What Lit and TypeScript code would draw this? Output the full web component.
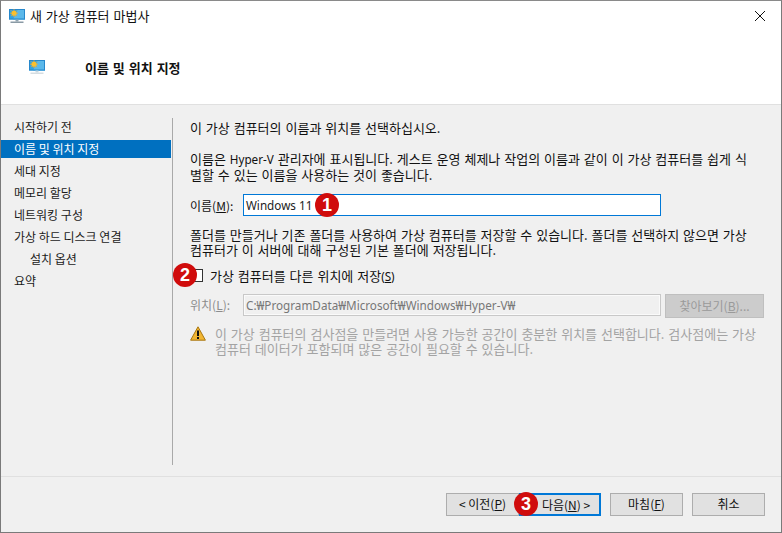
import { LitElement, html, css, svg } from "lit";
import { customElement } from "lit/decorators.js";

const monitor = (small: boolean) => svg`
  <svg class=${small ? "ico-title" : "ico-head"} viewBox="0 0 16 15" width="16" height="15">
    <rect x="0" y="0" width="16" height="10.5" fill="#35a3e2"/>
    <path d="M9 0H16V10.5H4Z" fill="#5bb8ea"/>
    <rect x="0.5" y="0.5" width="15" height="9.5" fill="none" stroke="#2788cc" stroke-width="1"/>
    <path d="M5 0.3V8M1.2 4.2H8.8M2.3 1.5L7.7 6.9M7.7 1.5L2.3 6.9" stroke="#f6a623" stroke-width="1"/>
    <circle cx="5" cy="4.2" r="2.5" fill="#fbc02d"/>
    <rect x="6.5" y="10.5" width="3" height="2" fill=${small ? "#8fa3b0" : "#c5d6e0"}/>
    <rect x="1.5" y="12.5" width="13" height="1.5" fill=${small ? "#8a9aa5" : "#d5dde2"}/>
  </svg>`;

@customElement("app-root")
export class AppRoot extends LitElement {
  static styles = css`
    :host {
      display: block;
      width: 782px;
      height: 533px;
      font-family: "Noto Sans CJK KR", "Noto Sans", sans-serif;
      font-size: 12px;
      color: #111;
    }
    .win {
      box-sizing: border-box;
      width: 782px;
      height: 533px;
      position: relative;
      display: flex;
      flex-direction: column;
      border: 1px solid #7a7a7a;
      border-top-color: #8a8a8a;
      background: #f0f0f0;
      overflow: hidden;
    }
    .titlebar {
      height: 30px;
      background: #fff;
      display: flex;
      align-items: center;
      padding-left: 8px;
      gap: 5px;
      flex: none;
    }
    .titlebar .t { flex: 1; font-size: 13px; word-spacing: 1px; line-height: 16px; }
    .close { width: 12px; height: 12px; margin-right: 15px; display: block; }
    .ico-title, .ico-head { display: block; flex: none; }
    .header {
      height: 74px;
      background: #fff;
      display: flex;
      align-items: center;
      padding-left: 28px;
      box-sizing: border-box;
      border-bottom: 1px solid #e0e0e0;
      flex: none;
    }
    .header b { margin-left: 40px; font-weight: 700; font-size: 13px; word-spacing: 1px; }
    .main {
      flex: 1;
      display: flex;
      min-height: 0;
      padding-top: 13px;
    }
    .nav {
      width: 170px;
      flex: none;
      list-style: none;
      margin: 0;
      padding: 0;
      display: flex;
      flex-direction: column;
      gap: 4px;
    }
    .nav li {
      height: 18px;
      line-height: 18px;
      padding-left: 13px;
      white-space: nowrap;
      color: #1a1a1a;
    }
    .nav li.sel { background: #0070c0; color: #fff; }
    .nav li.sub { padding-left: 29px; }
    .divider {
      width: 1px;
      background: #a9a9a9;
      margin: 0 0 11px 1px;
      flex: none;
    }
    .content {
      flex: 1;
      padding: 2px 17px 0 17px;
      min-width: 0;
      display: flex;
      flex-direction: column;
    }
    p { margin: 0; line-height: 15px; white-space: nowrap; font-size: 13px; word-spacing: 1px; }
    .lat { font-family: "Noto Sans", sans-serif; font-size: 11.7px; word-spacing: 0; }
    .mt15 { margin-top: 16px; }
    .field-row { display: flex; align-items: center; margin-top: 12px; height: 22px; }
    .field-row label { width: 53px; flex: none; }
    u { text-underline-offset: 1px; }
    .input {
      box-sizing: border-box;
      width: 418px;
      height: 22px;
      border: 1px solid #0078d7;
      background: #fff;
      line-height: 20px;
      padding-left: 2px;
      font-family: "Noto Sans", sans-serif;
      font-size: 11.7px;
      color: #222;
    }
    .note { margin-top: 11px; }
    .check-row { display: flex; align-items: center; margin-top: 10px; height: 16px; }
    .check-row span.lbl { font-size: 13px; word-spacing: 1px; }
    .box {
      box-sizing: border-box;
      width: 13px;
      height: 13px;
      border: 1px solid #333;
      background: #fff;
      flex: none;
      margin-right: 7px;
    }
    .loc-row { display: flex; align-items: flex-start; margin-top: 11px; color: #8c8c8c; }
    .loc-row label { width: 53px; flex: none; line-height: 22px; }
    .input.off {
      border: 1px solid #c8c8c8;
      background: #f0f0f0;
      color: #777;
      box-shadow: inset 0 0 0 1px #fafafa;
    }
    .browse {
      box-sizing: border-box;
      width: 99px;
      height: 24px;
      margin-left: 4px;
      background: #cccccc;
      border: 1px solid #bfbfbf;
      color: #9a9a9a;
      text-align: center;
      line-height: 22px;
    }
    .warn { display: flex; margin-top: 8px; color: #a3a3a3; }
    .warn svg { flex: none; margin: 0 9px 0 0; display: block; }
    .foot-line { height: 1px; background: #e0e0e0; flex: none; }
    .footer {
      height: 55px;
      flex: none;
      display: flex;
      align-items: flex-start;
      padding: 16px 16px 0 445px;
      box-sizing: border-box;
    }
    .btn {
      box-sizing: border-box;
      width: 73px;
      height: 23px;
      background: #e1e1e1;
      border: 1px solid #adadad;
      text-align: center;
      line-height: 20px;
      white-space: nowrap;
      flex: none;
    }
    .btn.focus { width: 82px; border: 2px solid #0078d7; line-height: 19px; padding-left: 12px; }
    .gap9 { margin-left: 9px; }
    .badge {
      position: absolute;
      width: 24px;
      height: 24px;
      border-radius: 50%;
      background: #d00c0c;
      color: #fff;
      font-family: "Liberation Sans", sans-serif;
      font-weight: 700;
      font-size: 18px;
      line-height: 24px;
      text-align: center;
    }
    .b1 { left: 314px; top: 192px; }
    .b2 { left: 172px; top: 262px; }
    .b3 { left: 513px; top: 491px; }
  `;

  render() {
    const nav = [
      ["시작하기 전", ""],
      ["이름 및 위치 지정", "sel"],
      ["세대 지정", ""],
      ["메모리 할당", ""],
      ["네트워킹 구성", ""],
      ["가상 하드 디스크 연결", ""],
      ["설치 옵션", "sub"],
      ["요약", ""],
    ];
    return html`
      <div class="win">
        <div class="titlebar">
          ${monitor(true)}
          <span class="t">새 가상 컴퓨터 마법사</span>
          <svg class="close" viewBox="0 0 12 12"><path d="M1 1L11 11M11 1L1 11" stroke="#111" stroke-width="1" fill="none"/></svg>
        </div>
        <div class="header">${monitor(false)}<b>이름 및 위치 지정</b></div>
        <div class="main">
          <ul class="nav">
            ${nav.map(([t, c]) => html`<li class=${c}>${t}</li>`)}
          </ul>
          <div class="divider"></div>
          <div class="content">
            <p>이 가상 컴퓨터의 이름과 위치를 선택하십시오.</p>
            <p class="mt15">이름은 <span class="lat">Hyper-V</span> 관리자에 표시됩니다. 게스트 운영 체제나 작업의 이름과 같이 이 가상 컴퓨터를 쉽게 식<br />별할 수 있는 이름을 사용하는 것이 좋습니다.</p>
            <div class="field-row">
              <label>이름(<u>M</u>):</label>
              <div class="input">Windows 11</div>
            </div>
            <p class="note">폴더를 만들거나 기존 폴더를 사용하여 가상 컴퓨터를 저장할 수 있습니다. 폴더를 선택하지 않으면 가상<br />컴퓨터가 이 서버에 대해 구성된 기본 폴더에 저장됩니다.</p>
            <div class="check-row"><span class="box"></span><span class="lbl">가상 컴퓨터를 다른 위치에 저장<span class="lat">(<u>S</u>)</span></span></div>
            <div class="loc-row">
              <label>위치(<u>L</u>):</label>
              <div class="input off">C:₩ProgramData₩Microsoft₩Windows₩Hyper-V₩</div>
              <div class="browse">찾아보기(<u>B</u>)...</div>
            </div>
            <div class="warn">
              <svg width="16" height="15" viewBox="0 0 16 15">
                <path d="M8 0.8L15.4 14.2H0.6Z" fill="#f2b632" stroke="#a8760f" stroke-width="1" stroke-linejoin="round"/>
                <rect x="7" y="4.5" width="2" height="5.5" fill="#111"/>
                <rect x="7" y="11" width="2" height="2" fill="#111"/>
              </svg>
              <p>이 가상 컴퓨터의 검사점을 만들려면 사용 가능한 공간이 충분한 위치를 선택합니다. 검사점에는 가상<br />컴퓨터 데이터가 포함되며 많은 공간이 필요할 수 있습니다.</p>
            </div>
          </div>
        </div>
        <div class="foot-line"></div>
        <div class="footer">
          <div class="btn">&lt; 이전(<u>P</u>)</div>
          <div class="btn focus">다음(<u>N</u>) &gt;</div>
          <div class="btn gap9">마침(<u>F</u>)</div>
          <div class="btn gap9">취소</div>
        </div>
        <div class="badge b1">1</div>
        <div class="badge b2">2</div>
        <div class="badge b3">3</div>
      </div>
    `;
  }
}
